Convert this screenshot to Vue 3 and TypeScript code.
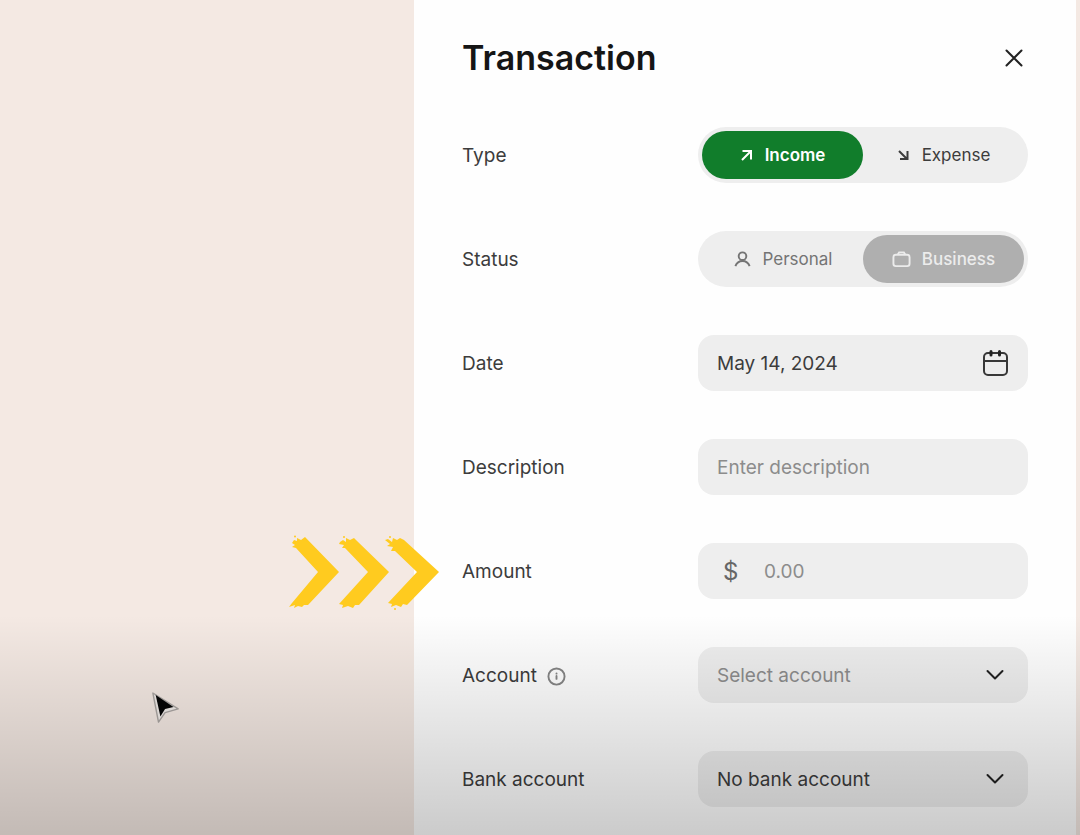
<script setup lang="ts">
import { ref } from 'vue'

type Kind = 'income' | 'expense'
type Status = 'personal' | 'business'

const kind = ref<Kind>('income')
const status = ref<Status>('business')
const date = ref('May 14, 2024')
const description = ref('')
const amount = ref('')
const account = ref('')
const bank = ref('none')
</script>

<template>
  <div class="page">
    <div class="backdrop">
      <svg class="pointer" viewBox="0 0 32 36" aria-hidden="true">
        <path d="M2 2 L8 33 L15 23 L29 19 Z" fill="#f1ece9" stroke="#aaa5a2" stroke-width="1.500" stroke-linejoin="round" />
        <path d="M5 4 L24 17 L15 19 L10 27 Z" fill="#050505" />
      </svg>
    </div>

    <main class="panel">
      <header class="head">
        <h1>Transaction</h1>
        <button class="close" type="button" aria-label="Close">
          <svg viewBox="0 0 20 20"><path d="M2.500 2.500 L17.500 17.500 M17.500 2.500 L2.500 17.500" /></svg>
        </button>
      </header>

      <form class="form" @submit.prevent>
        <div class="row">
          <span id="type-label" class="label">Type</span>
          <div class="toggle" role="group" aria-labelledby="type-label">
            <button type="button" class="option" :class="{ green: kind === 'income' }" :aria-pressed="kind === 'income'" @click="kind = 'income'">
              <svg class="arrow" viewBox="0 0 14 14"><path d="M2 12 L11 3 M2.500 3 H11 V11.500" /></svg>
              <span>Income</span>
            </button>
            <button type="button" class="option" :class="{ green: kind === 'expense' }" :aria-pressed="kind === 'expense'" @click="kind = 'expense'">
              <svg class="arrow" viewBox="0 0 14 14"><path d="M2 3 L10 11 M10.500 3 V11 H3" /></svg>
              <span>Expense</span>
            </button>
          </div>
        </div>

        <div class="row">
          <span id="status-label" class="label">Status</span>
          <div class="toggle" role="group" aria-labelledby="status-label">
            <button type="button" class="option muted" :class="{ gray: status === 'personal' }" :aria-pressed="status === 'personal'" @click="status = 'personal'">
              <svg class="glyph" viewBox="0 0 20 20"><circle cx="10" cy="6.500" r="4" /><path d="M2.500 17 C4 13 6.500 11.500 10 11.500 S16 13 17.500 17" /></svg>
              <span>Personal</span>
            </button>
            <button type="button" class="option muted" :class="{ gray: status === 'business' }" :aria-pressed="status === 'business'" @click="status = 'business'">
              <svg class="glyph" viewBox="0 0 20 20"><rect x="1.500" y="5" width="17" height="12" rx="2.500" /><path d="M6 5 L7.500 2.500 H12.500 L14 5" /></svg>
              <span>Business</span>
            </button>
          </div>
        </div>

        <div class="row">
          <label class="label" for="date">Date</label>
          <div class="field">
            <input id="date" v-model="date" type="text" />
            <button class="calendar" type="button" aria-label="Open calendar">
              <svg viewBox="0 0 28 28"><rect x="3" y="4" width="23" height="22" rx="4" /><path d="M3 12 H26" /><path class="pins" d="M10 2.500 V6 M18.500 2.500 V6" /></svg>
            </button>
          </div>
        </div>

        <div class="row">
          <label class="label" for="description">Description</label>
          <div class="field">
            <input id="description" v-model="description" type="text" placeholder="Enter description" />
          </div>
        </div>

        <div class="row marked">
          <svg class="chevrons" viewBox="0 0 152 76" aria-hidden="true">
            <g fill="#ffcb1f">
              <path d="M4 9 L6 6 L9 7 L9 4 L13 6 L17 3 L51 38 L20 71 L16 71 L14 73 L10 72 L6 74 L7 71 L1 73 L4 69 L30 38 L8 14 L4 13 L7 11 Z" />
              <path d="M52 8 L55 6 L58 8 L58 4 L62 6 L66 4 L68 6 L101 38 L71 71 L67 71 L65 74 L60 72 L54 74 L55 71 L51 70 L80 38 L57 14 L54 14 L56 11 L51 10 Z" />
              <path d="M97 6 L100 5 L104 8 L105 4 L109 6 L112 4 L116 6 L151 38 L119 71 L115 70 L113 73 L108 71 L103 73 L104 70 L100 69 L129 38 L107 17 L103 17 L105 13 L99 12 L102 10 Z" />
              <circle cx="7" cy="2.500" r="1" />
              <circle cx="56" cy="3" r="1" />
              <circle cx="102" cy="3" r="1" />
              <circle cx="107" cy="75" r="1" />
            </g>
          </svg>
          <label class="label" for="amount">Amount</label>
          <div class="field">
            <span class="currency" aria-hidden="true">$</span>
            <input id="amount" v-model="amount" type="text" inputmode="decimal" placeholder="0.00" />
          </div>
        </div>

        <div class="row">
          <label class="label" for="account">
            Account
            <svg class="info" viewBox="0 0 20 20" aria-hidden="true"><circle cx="10" cy="10" r="8.500" /><path d="M10 9.500 V12.500" /><path d="M10 6.800 V7" /></svg>
          </label>
          <div class="field">
            <select id="account" v-model="account" :class="{ empty: account === '' }">
              <option value="">Select account</option>
              <option value="main">Main account</option>
            </select>
            <svg class="caret" viewBox="0 0 20 20" aria-hidden="true"><path d="M2.500 6 L10 13.500 L17.500 6" /></svg>
          </div>
        </div>

        <div class="row">
          <label class="label" for="bank">Bank account</label>
          <div class="field">
            <select id="bank" v-model="bank">
              <option value="none">No bank account</option>
              <option value="checking">Checking</option>
            </select>
            <svg class="caret" viewBox="0 0 20 20" aria-hidden="true"><path d="M2.500 6 L10 13.500 L17.500 6" /></svg>
          </div>
        </div>
      </form>
    </main>

    <div class="shade" aria-hidden="true"></div>
  </div>
</template>

<style>
body {
  margin: 0;
}
</style>

<style scoped>
.page {
  position: relative;
  display: grid;
  grid-template-columns: minmax(0, 414fr) minmax(0, 662fr) 4px;
  min-height: 100vh;
  background: #f4e9e3;
  color: #3c3c3c;
  font-family: Inter, "Liberation Sans", sans-serif;
  font-size: 19px;
}

.backdrop {
  position: relative;
}

.pointer {
  position: absolute;
  left: 151px;
  top: 691px;
  width: 30px;
  height: 34px;
}

.panel {
  box-sizing: border-box;
  padding: 32px 48px 28px;
  background: #fefefe;
}

.head {
  display: flex;
  align-items: center;
  justify-content: space-between;
  height: 52px;
  margin-bottom: 43px;
}

h1 {
  margin: 0;
  color: #151515;
  font-size: 34px;
  font-weight: 600;
  line-height: 52px;
}

button {
  margin: 0;
  padding: 0;
  border: 0;
  background: none;
  color: inherit;
  font: inherit;
  cursor: pointer;
}

svg {
  display: block;
  flex: none;
  fill: none;
}

.close svg {
  width: 20px;
  height: 20px;
  stroke: #222;
  stroke-width: 2;
  stroke-linecap: round;
}

.close {
  padding: 4px;
}

.form {
  display: flex;
  flex-direction: column;
  gap: 48px;
}

.row {
  display: grid;
  grid-template-columns: minmax(0, 236fr) minmax(0, 330fr);
  align-items: center;
  height: 56px;
}

.marked {
  position: relative;
}

.chevrons {
  position: absolute;
  right: calc(100% + 22px);
  top: -9px;
  width: 152px;
  height: 76px;
}

.label {
  display: flex;
  align-items: center;
  gap: 10px;
  padding-top: 2px;
  line-height: 24px;
}

.info {
  width: 19px;
  height: 19px;
  stroke: #858585;
  stroke-width: 2;
  stroke-linecap: round;
}

.toggle {
  display: grid;
  grid-template-columns: 1fr 1fr;
  box-sizing: border-box;
  height: 56px;
  padding: 4px;
  border-radius: 28px;
  background: #eee;
}

.option {
  display: flex;
  align-items: center;
  justify-content: center;
  gap: 11px;
  border-radius: 24px;
  color: #3c3c3c;
  font-size: 17px;
  font-weight: 400;
}

.option svg {
  stroke: currentColor;
  stroke-width: 2;
}

.option .arrow {
  width: 14px;
  height: 14px;
}

.option .glyph {
  width: 19px;
  height: 19px;
}

.muted {
  color: #747474;
}

.green {
  background: #117d2b;
  color: #fff;
  font-weight: 600;
}

.gray {
  background: #afafaf;
  color: #ececec;
  font-weight: 500;
}

.field {
  position: relative;
  display: flex;
  align-items: center;
  box-sizing: border-box;
  height: 56px;
  padding: 0 19px;
  border-radius: 16px;
  background: #eee;
}

input,
select {
  flex: 1;
  min-width: 0;
  height: 100%;
  margin: 0;
  padding: 0;
  border: 0;
  outline: 0;
  background: none;
  color: #3c3c3c;
  font: inherit;
  appearance: none;
}

input::placeholder {
  color: #8c8c8c;
  opacity: 1;
}

.empty {
  color: #8c8c8c;
}

.calendar svg {
  width: 28px;
  height: 28px;
  stroke: #383838;
  stroke-width: 2;
}

.calendar .pins {
  stroke: #222;
  stroke-width: 3;
  stroke-linecap: round;
}

.currency {
  width: 47px;
  box-sizing: border-box;
  padding-left: 6px;
  color: #666;
  font-size: 24px;
}

.caret {
  position: absolute;
  right: 23px;
  width: 20px;
  height: 20px;
  pointer-events: none;
  stroke: #222;
  stroke-width: 2;
  stroke-linecap: round;
  stroke-linejoin: round;
}

.shade {
  position: absolute;
  right: 0;
  bottom: 0;
  left: 0;
  height: 220px;
  background: linear-gradient(rgba(0, 0, 0, 0), rgba(0, 0, 0, 0.2));
  pointer-events: none;
}
</style>
